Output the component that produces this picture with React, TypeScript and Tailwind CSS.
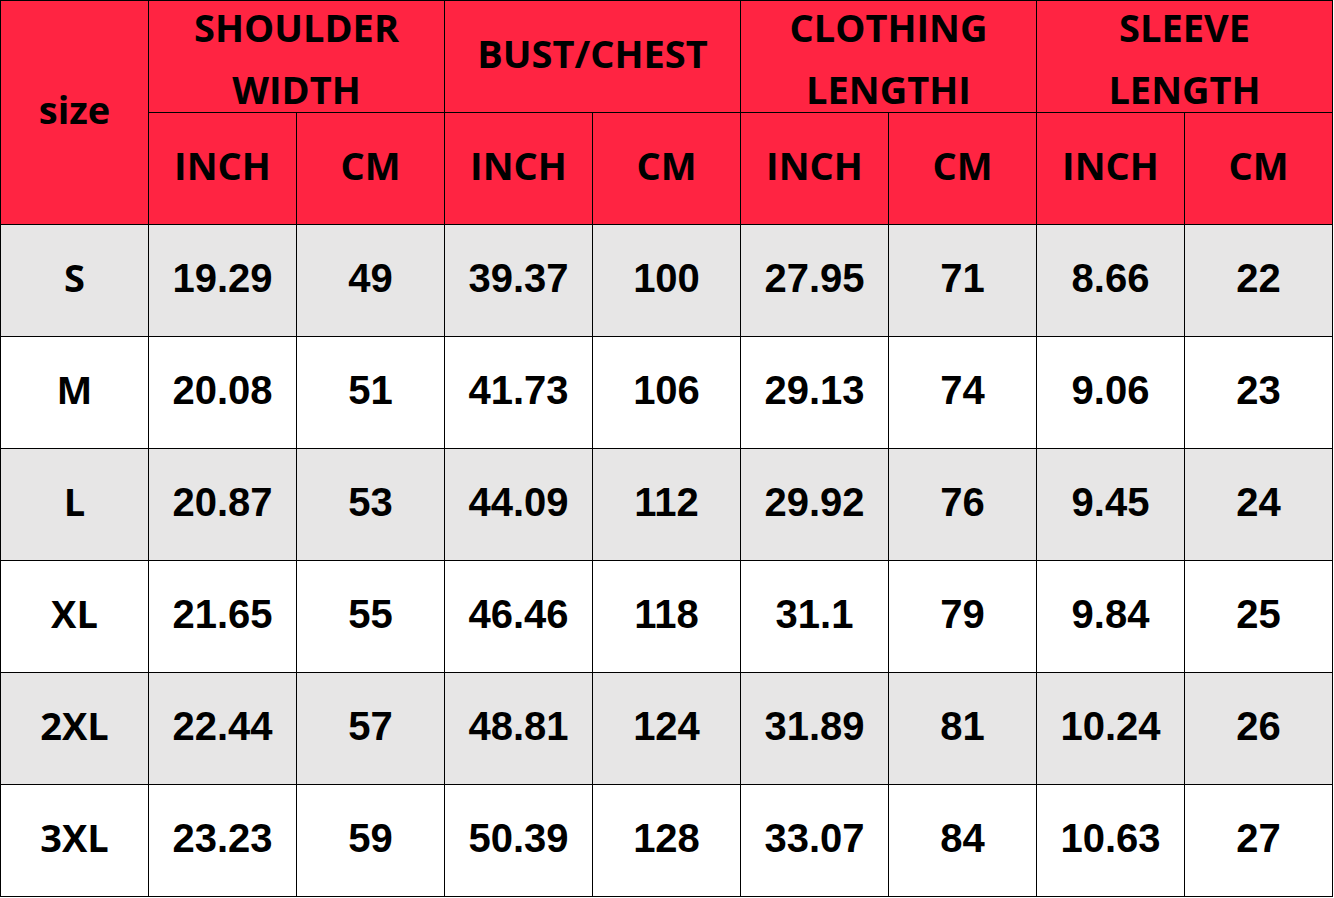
import React from "react"

const groups = ["SHOULDER WIDTH", "BUST/CHEST", "CLOTHING LENGTHI", "SLEEVE LENGTH"]
const groupLines: Record<string, string[]> = {
  "SHOULDER WIDTH": ["SHOULDER", "WIDTH"],
  "BUST/CHEST": ["BUST/CHEST"],
  "CLOTHING LENGTHI": ["CLOTHING", "LENGTHI"],
  "SLEEVE LENGTH": ["SLEEVE", "LENGTH"],
}

const rows = [
  ["S", "19.29", "49", "39.37", "100", "27.95", "71", "8.66", "22"],
  ["M", "20.08", "51", "41.73", "106", "29.13", "74", "9.06", "23"],
  ["L", "20.87", "53", "44.09", "112", "29.92", "76", "9.45", "24"],
  ["XL", "21.65", "55", "46.46", "118", "31.1", "79", "9.84", "25"],
  ["2XL", "22.44", "57", "48.81", "124", "31.89", "81", "10.24", "26"],
  ["3XL", "23.23", "59", "50.39", "128", "33.07", "84", "10.63", "27"],
]

const head = "font-['Open_Sans',sans-serif] font-bold text-[38px] text-black"
const num = "font-['Liberation_Sans',Arial,sans-serif] font-bold text-[40px] text-black"

export default function App() {
  return (
    <div className="w-[1334px] h-[898px] bg-white">
      <div className="grid grid-cols-[repeat(9,147px)] grid-rows-[repeat(8,111px)] gap-px bg-black p-px w-[1333px]">
        <div className={`row-span-2 bg-[#ff2442] flex items-center justify-center pb-[6px] ${head}`}>size</div>
        {groups.map((g) => (
          <div
            key={g}
            className={`col-span-2 bg-[#ff2442] flex flex-col items-center justify-center leading-[62px] ${
              groupLines[g].length > 1 ? "pt-[2px]" : "pb-[8px]"
            } ${head}`}
          >
            {groupLines[g].map((l) => (
              <span key={l}>{l}</span>
            ))}
          </div>
        ))}
        {groups.map((g) => (
          <React.Fragment key={g + "-u"}>
            <div className={`bg-[#ff2442] flex items-center justify-center pb-[6px] ${head}`}>INCH</div>
            <div className={`bg-[#ff2442] flex items-center justify-center pb-[6px] ${head}`}>CM</div>
          </React.Fragment>
        ))}
        {rows.map((r, i) =>
          r.map((c, j) => (
            <div
              key={i + "-" + j}
              className={`flex items-center justify-center pb-[6px] ${i % 2 === 0 ? "bg-[#e7e6e6]" : "bg-white"} ${j === 0 ? head : num}`}
            >
              {c}
            </div>
          ))
        )}
      </div>
    </div>
  )
}
